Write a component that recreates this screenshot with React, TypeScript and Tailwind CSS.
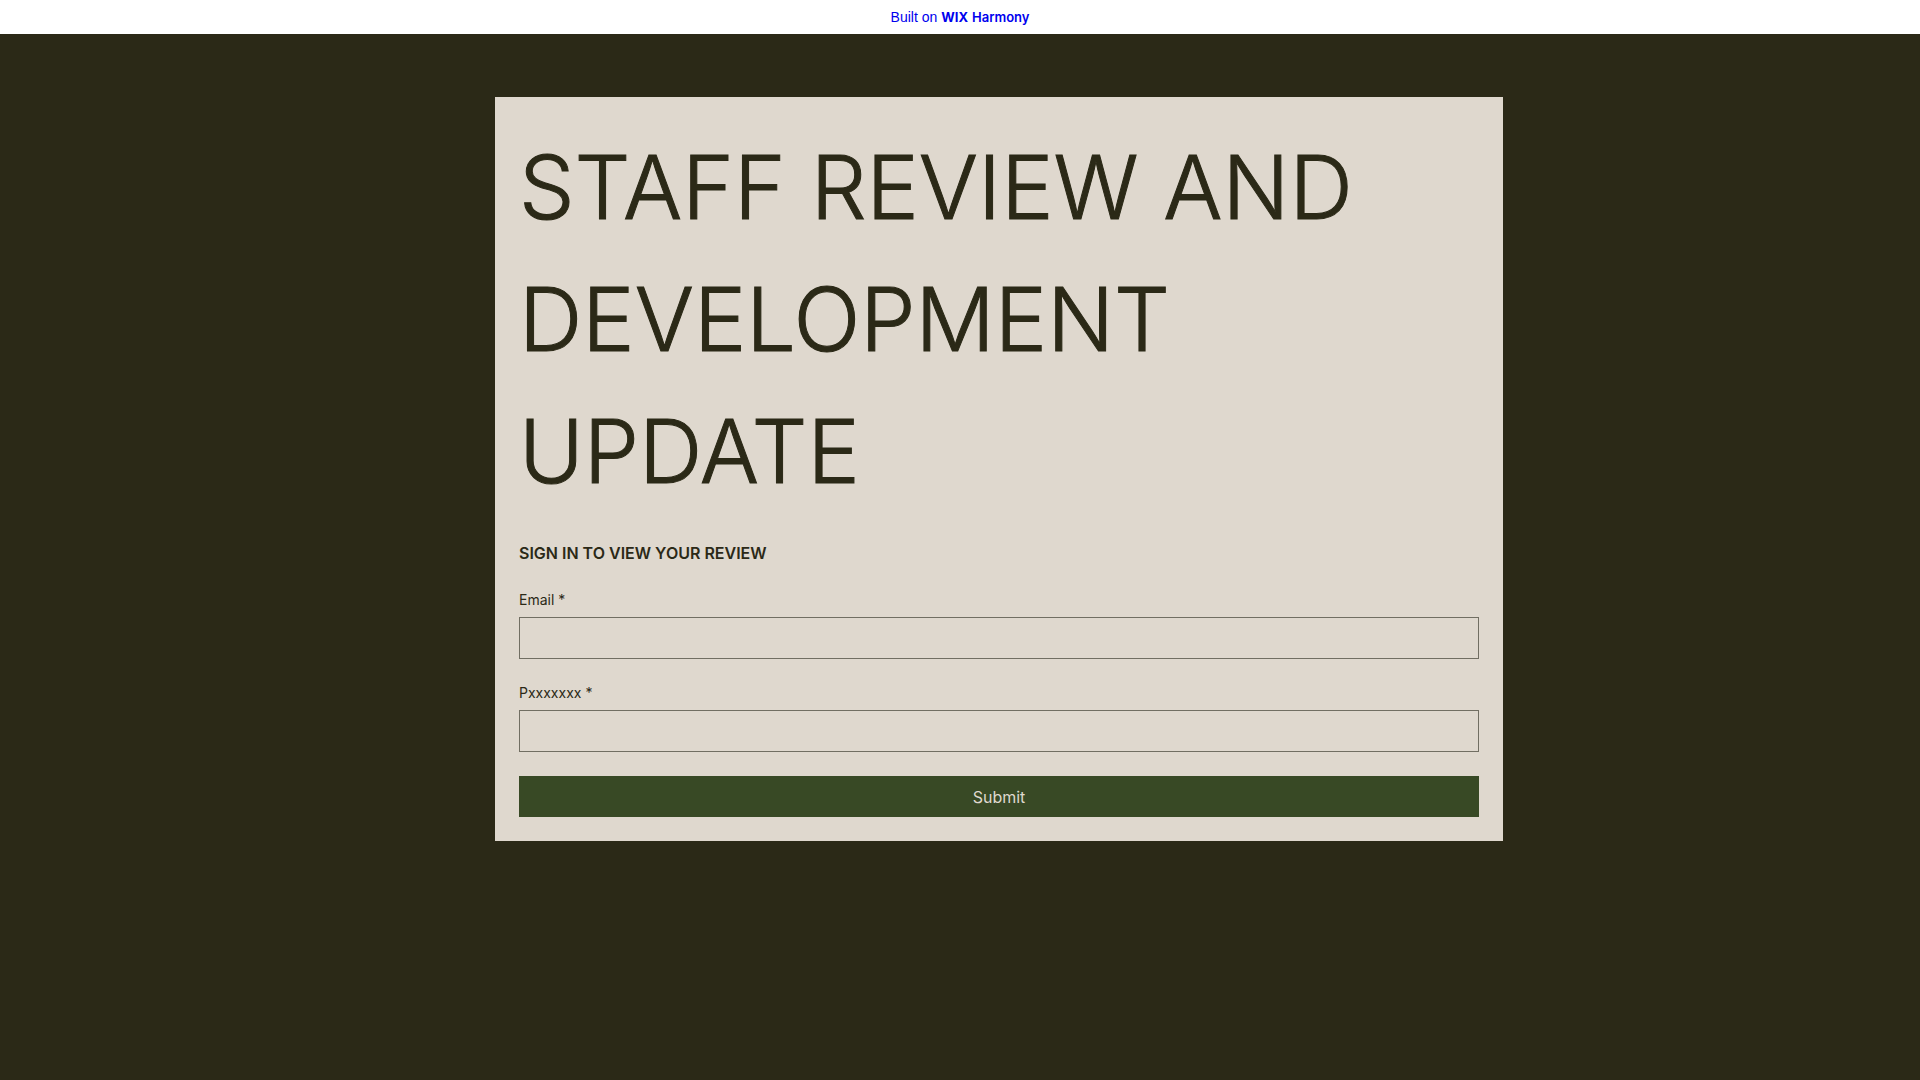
import React, { useState } from 'react';

interface FieldProps {
  id: string;
  label: string;
  type: string;
  value: string;
  onChange: (value: string) => void;
}

const Field: React.FC<FieldProps> = ({ id, label, type, value, onChange }) => (
  <div className="flex flex-col gap-2">
    <label htmlFor={id} className="text-sm leading-[19px]">
      {label} *
    </label>
    <input
      id={id}
      type={type}
      required
      value={value}
      onChange={(e) => onChange(e.target.value)}
      className="w-full h-[42px] px-3 border border-[#716e62] bg-transparent text-base outline-none focus:border-[#2b2917]"
    />
  </div>
);

const TopBanner: React.FC = () => (
  <header className="flex h-[34px] items-center justify-center bg-white">
    <a href="#" className="flex items-baseline gap-1 text-sm text-[#0000ee]">
      <span className="font-['Liberation_Sans',sans-serif]">Built on</span>
      <span className="flex items-baseline gap-1 font-['Inter',sans-serif] text-[13px]">
        <span className="font-bold">WIX</span>
        <span className="font-semibold">Harmony</span>
      </span>
    </a>
  </header>
);

export default function App() {
  const [email, setEmail] = useState('');
  const [password, setPassword] = useState('');

  const handleSubmit = (e: React.FormEvent) => {
    e.preventDefault();
  };

  return (
    <div className="flex min-h-screen flex-col bg-[#2b2917] font-['Inter',sans-serif] text-[#2b2917]">
      <TopBanner />
      <main className="flex justify-center pt-[63px] pb-16 pl-[78px]">
        <form
          onSubmit={handleSubmit}
          className="flex w-full max-w-[1008px] flex-col gap-6 bg-[#dfd8ce] p-6"
        >
          <h1 className="text-[88px] leading-[132px] font-light [-webkit-text-stroke:1px_#2b2917]">
            STAFF REVIEW AND DEVELOPMENT UPDATE
          </h1>
          <p className="text-base leading-[25px] font-semibold">SIGN IN TO VIEW YOUR REVIEW</p>
          <Field id="email" label="Email" type="email" value={email} onChange={setEmail} />
          <Field
            id="password"
            label="Pxxxxxxx"
            type="password"
            value={password}
            onChange={setPassword}
          />
          <button
            type="submit"
            className="h-[41px] w-full cursor-pointer bg-[#384925] text-base text-[#dfd8ce]"
          >
            Submit
          </button>
        </form>
      </main>
    </div>
  );
}
